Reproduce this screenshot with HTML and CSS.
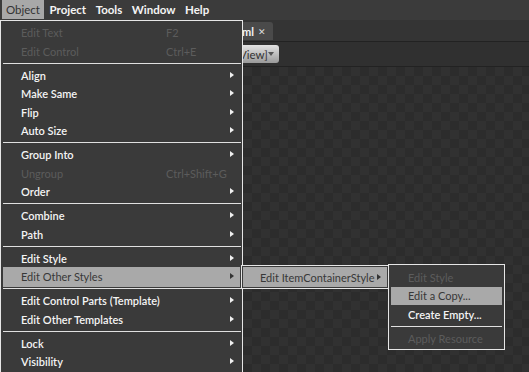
FILE: index.html
```html
<!DOCTYPE html>
<html lang="en">
<head>
  <meta charset="UTF-8" />
  <title>Object menu</title>
  <link rel="stylesheet" href="styles.css">
</head>
<body>
  <div class="menubar">
    <span class="top-item open">Object</span>
    <span class="top-item">Project</span>
    <span class="top-item">Tools</span>
    <span class="top-item">Window</span>
    <span class="top-item">Help</span>
  </div>
  <div class="tabs">
    <div class="tab">ml <span class="close">&#x2715;</span></div>
  </div>
  <div class="toolbar">
    <div class="dropdown">View] <span class="caret"></span></div>
  </div>
  <div class="canvas"></div>

  <!-- Object menu -->
  <div class="menu main-menu">
    <div class="item disabled"><span>Edit Text</span><span class="key">F2</span></div>
    <div class="item disabled"><span>Edit Control</span><span class="key">Ctrl+E</span></div>
    <div class="sep"></div>
    <div class="item sub"><span>Align</span></div>
    <div class="item sub"><span>Make Same</span></div>
    <div class="item sub"><span>Flip</span></div>
    <div class="item sub"><span>Auto Size</span></div>
    <div class="sep"></div>
    <div class="item sub"><span>Group Into</span></div>
    <div class="item disabled"><span>Ungroup</span><span class="key">Ctrl+Shift+G</span></div>
    <div class="item sub"><span>Order</span></div>
    <div class="sep"></div>
    <div class="item sub"><span>Combine</span></div>
    <div class="item sub"><span>Path</span></div>
    <div class="sep"></div>
    <div class="item sub"><span>Edit Style</span></div>
    <div class="item sub hot"><span>Edit Other Styles</span></div>
    <div class="sep"></div>
    <div class="item sub"><span>Edit Control Parts (Template)</span></div>
    <div class="item sub"><span>Edit Other Templates</span></div>
    <div class="sep"></div>
    <div class="item sub"><span>Lock</span></div>
    <div class="item sub"><span>Visibility</span></div>
  </div>

  <div class="menu styles-menu">
    <div class="item sub hot"><span>Edit ItemContainerStyle</span></div>
  </div>

  <div class="menu copy-menu">
    <div class="item disabled"><span>Edit Style</span></div>
    <div class="item hot"><span>Edit a Copy...</span></div>
    <div class="item"><span>Create Empty...</span></div>
    <div class="sep"></div>
    <div class="item disabled"><span>Apply Resource</span></div>
  </div>
</body>
</html>
```

FILE: styles.css
```css
body { margin: 0; height: 372px; overflow: hidden; font-family: Lato, "Open Sans", sans-serif; font-size: 11px; background: #2e2e2e; color: #f4f4f4; position: relative; }

.menubar { height: 20px; background: #3b3b3b; display: flex; padding-left: 2px; font-size: 11.5px; }
.top-item { height: 19px; line-height: 19px; padding: 0 4px; font-weight: 700; margin-right: 1.5px; }
.top-item.open { background: #a8a8a8; color: #333; font-weight: 400; }

.tabs { height: 21px; background: #343434; border-bottom: 1px solid #222; display: flex; align-items: flex-end; }
.tab { width: 33px; margin-left: 240px; height: 18px; background: #4a4a4a; border-radius: 0 3px 0 0; display: flex; align-items: center; gap: 4px; padding-left: 2px; box-sizing: border-box; font-weight: 700; margin-bottom: 1px; }
.close { font-size: 9px; color: #ddd; font-weight: 400; }

.toolbar { height: 24px; background: #303030; border-bottom: 1px solid #222; display: flex; align-items: center; }
.dropdown { width: 46px; margin-left: 233px; height: 18px; box-sizing: border-box; border-radius: 0 3px 3px 0; background: linear-gradient(#e2e2e2, #9a9a9a); color: #333; display: flex; align-items: center; justify-content: space-between; padding: 0 5px 0 6px; font-size: 11.5px; }
.caret { flex-shrink: 0; border-left: 3px solid transparent; border-right: 3px solid transparent; border-top: 4px solid #555; }

.canvas { height: 305px; background-color: #2c2c2c; background-image: conic-gradient(#313131 25%, #2c2c2c 0 50%, #313131 0 75%, #2c2c2c 0); background-size: 18px 18px; }

.menu { position: absolute; background: #3a3a3a; border: 1px solid #e6e6e6; box-sizing: border-box; padding: 2.5px 0; }
.main-menu { left: 0; top: 20px; width: 243px; height: 360px; }
.styles-menu { left: 241px; top: 265px; width: 148px; height: 24px; padding: 1px 0; }
.copy-menu { left: 388px; top: 264px; width: 117px; height: 86px; padding-top: 3px; }

.item { height: 18.5px; margin: 0 2px; padding-left: 18px; display: flex; align-items: center; position: relative; font-weight: 600; white-space: nowrap; }
.item .key { position: absolute; left: 163px; font-weight: 400; }
.item.disabled { color: #5c5c5c; font-weight: 400; }
.item.hot { background: #a9a9a9; color: #383838; font-weight: 400; }
.main-menu .item.hot { margin-top: -1px; margin-bottom: -0.5px; height: 20px; }
.item.sub::after { content: ""; position: absolute; right: 6px; top: 50%; margin-top: -3.5px; border-top: 3.5px solid transparent; border-bottom: 3.5px solid transparent; border-left: 4px solid #f0f0f0; }
.item.sub.hot::after { border-left-color: #333; }
.styles-menu .item { height: 20px; padding-left: 17px; margin: 0 1px; }
.styles-menu .item.sub::after { right: 6px; }
.copy-menu .item { padding-left: 17px; }

.sep { height: 1px; background: #e0e0e0; margin: 2px 1px 2.5px 2px; }
.copy-menu .sep { margin: 2px 2px 2.5px; }
```
